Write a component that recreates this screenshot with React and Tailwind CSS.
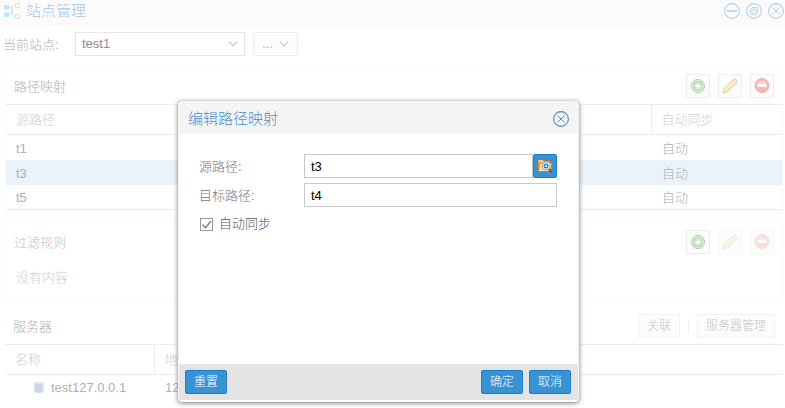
import { useState } from 'react';

const pathMappings = [
  { id: 1, source: 't1', sync: '自动' },
  { id: 2, source: 't3', sync: '自动', selected: true },
  { id: 3, source: 't5', sync: '自动' },
];

const SiteIcon = () => (
  <svg width="18" height="18" viewBox="0 0 18 18" fill="none">
    <rect x="1" y="3" width="5" height="4.500" rx=".8" fill="#b9e6fb" />
    <rect x="1" y="10.500" width="5" height="4.500" rx=".8" fill="#b9e6fb" />
    <path d="M6 5.500h2.500v7H6M8.500 9h1V5l1-2h2M9.500 9v3l1.500 2.500h1.500" stroke="#dde8e4" />
    <rect x="12.500" y="1.500" width="4" height="4" rx=".5" stroke="#dce1dc" />
    <rect x="12.500" y="12.500" width="4" height="4" rx=".5" stroke="#dce1dc" />
  </svg>
);

const WindowIcon = ({ children }) => (
  <svg width="16" height="16" viewBox="0 0 16 16" fill="none" stroke="currentColor">
    <circle cx="8" cy="8" r="7.400" strokeWidth="1.100" />
    {children}
  </svg>
);

const CrossPath = () => <path d="M4.500 4.500l7 7M11.500 4.500l-7 7" />;

const AddIcon = () => (
  <svg width="16" height="16" viewBox="0 0 16 16">
    <circle cx="8" cy="8" r="6.600" fill="#8fd07f" stroke="#5e9e5e" />
    <circle cx="8" cy="8" r="5.500" fill="#74c266" stroke="#b5e0ac" />
    <path d="M8 5v6M5 8h6" stroke="#fff" strokeWidth="2.200" />
  </svg>
);

const EditIcon = () => (
  <svg width="16" height="16" viewBox="0 0 16 16">
    <path d="M1 15l1-4.500L11 1.500q1-1 2.200-.500l1.800 1.800q.500 1.200-.500 2.200L5.500 14z" fill="#f7cf52" stroke="#b58a35" strokeWidth=".8" />
    <path d="M3.500 11.500l8-8" stroke="#fdeaa0" strokeWidth="1.500" />
    <path d="M11 1.500q1-1 2.200-.500l1.800 1.800q.500 1.200-.500 2.200l-1 1-3.500-3.500z" fill="#efc6a4" stroke="#c79b78" strokeWidth=".6" />
    <path d="M1 15l1-4 3 3z" fill="#eed9ac" />
    <path d="M1 15l.5-2 1.500 1.500z" fill="#555" />
  </svg>
);

const RemoveIcon = () => (
  <svg width="16" height="16" viewBox="0 0 16 16">
    <circle cx="8" cy="7.500" r="7" fill="#ee6a5a" stroke="#d9574b" />
    <path d="M2.500 6a6 5 0 0 1 11 0" fill="#f39b8c" />
    <rect x="3.500" y="6" width="9" height="3" fill="#fff" />
  </svg>
);

const ServerIcon = () => (
  <svg width="12" height="13" viewBox="0 0 12 13">
    <path d="M1 2q5-2 10 0v8.500q-5 3-10 0z" fill="#ccd5e6" />
    <path d="M1 2q5-2 10 0-5 2.500-10 0z" fill="#e6e9ec" />
    <path d="M9 3l2-1v8.500l-2 1z" fill="#dfe2e7" />
    <path d="M1.500 2.500v8" stroke="#e1e3e8" />
  </svg>
);

const BrowseIcon = () => (
  <svg width="16" height="16" viewBox="0 0 16 16">
    <path d="M1 13V2.500L2 1.500h4l1 1.500h6.500V5" fill="#fbd37c" stroke="#c96a12" />
    <path d="M1 13.500L2.500 5H15l-1.500 8.500z" fill="#ffe0a0" stroke="#d9780f" />
    <path d="M11.500 11l3.500 3.500" stroke="#7a5a18" strokeWidth="2" />
    <circle cx="9" cy="8" r="4" fill="#eef6fc" stroke="#8aa3b5" strokeWidth=".8" />
    <circle cx="9" cy="8" r="1.800" fill="#fff" stroke="#2f83c4" strokeWidth="1.400" />
  </svg>
);

const Chevron = () => (
  <svg width="10" height="6" viewBox="0 0 10 6" fill="none" stroke="#cdcdcd" strokeWidth="1.300">
    <path d="M1 .8l4 4 4-4" />
  </svg>
);

const ToolButton = ({ label, disabled, children }) => (
  <button
    type="button"
    aria-label={label}
    disabled={disabled}
    className={`flex size-6 items-center justify-center rounded-xs border bg-[#fcfcfc] ${disabled ? 'border-[#f7f7f7]' : 'border-[#ededed]'}`}
  >
    <span className={disabled ? 'opacity-20' : 'opacity-45'}>{children}</span>
  </button>
);

const TextButton = ({ children }) => (
  <button type="button" className="h-6 rounded-xs border border-[#f1f1f1] bg-[#fcfcfc] px-2 text-xs text-[#c4c4c4]">
    {children}
  </button>
);

const PrimaryButton = ({ children, onClick }) => (
  <button
    type="button"
    onClick={onClick}
    className="h-6 rounded-xs border border-[#157fcc] bg-[#3892d4] px-2 text-xs text-white"
  >
    {children}
  </button>
);

const EditDialog = () => {
  const [source, setSource] = useState('t3');
  const [target, setTarget] = useState('t4');
  const [autoSync, setAutoSync] = useState(true);

  const reset = () => {
    setSource('t3');
    setTarget('t4');
    setAutoSync(true);
  };

  return (
    <div
      role="dialog"
      aria-labelledby="dialog-title"
      className="absolute top-[101px] left-[178px] flex h-[301px] w-[401px] flex-col overflow-hidden rounded border border-[#f4f4f4] bg-white shadow-[0_1px_5px_#777]"
    >
      <div className="flex h-8 shrink-0 items-center justify-between bg-[#f4f4f4] px-[9px] pt-0.5">
        <h2 id="dialog-title" className="text-[15px] leading-5 text-[#4a8fcb]">编辑路径映射</h2>
        <button type="button" aria-label="关闭" className="text-[#4a8fc0]">
          <WindowIcon><CrossPath /></WindowIcon>
        </button>
      </div>
      <form className="flex flex-1 flex-col gap-[5px] pt-5 pr-[21px] pl-5">
        <div className="flex items-center">
          <label htmlFor="source" className="w-[105px] pt-0.5 text-[#777]">源路径:</label>
          <input
            id="source"
            value={source}
            onChange={(e) => setSource(e.target.value)}
            className="h-6 min-w-0 flex-1 border border-[#c8c8c8] px-1.5 text-black"
          />
          <button
            type="button"
            aria-label="浏览"
            className="flex size-6 items-center justify-center rounded-xs border border-[#157fcc] bg-[#3892d4]"
          >
            <BrowseIcon />
          </button>
        </div>
        <div className="flex items-center">
          <label htmlFor="target" className="w-[105px] pt-0.5 text-[#777]">目标路径:</label>
          <input
            id="target"
            value={target}
            onChange={(e) => setTarget(e.target.value)}
            className="h-6 min-w-0 flex-1 border border-[#c8c8c8] px-1.5 text-black"
          />
        </div>
        <label className="flex h-6 items-center gap-1.5 pl-px text-[#555]">
          <span className="grid">
            <input
              type="checkbox"
              checked={autoSync}
              onChange={(e) => setAutoSync(e.target.checked)}
              className="peer col-start-1 row-start-1 size-[13px] appearance-none border border-[#999] bg-white"
            />
            <svg
              width="13"
              height="13"
              viewBox="0 0 13 13"
              fill="none"
              stroke="#8a8a8a"
              strokeWidth="1.600"
              className="pointer-events-none invisible col-start-1 row-start-1 peer-checked:visible"
            >
              <path d="M2.500 6.500l3 3.200L11 3" />
            </svg>
          </span>
          自动同步
        </label>
      </form>
      <div className="mb-px flex h-9 shrink-0 items-center gap-1.5 bg-[#e4e4e4] pr-[7px] pl-1.5">
        <PrimaryButton onClick={reset}>重置</PrimaryButton>
        <span className="flex-1" />
        <PrimaryButton>确定</PrimaryButton>
        <PrimaryButton>取消</PrimaryButton>
      </div>
    </div>
  );
};

const App = () => {
  return (
    <div className="relative min-h-screen overflow-hidden bg-white font-['Liberation_Sans','Noto_Sans_CJK_SC',sans-serif] text-[13px] leading-5 font-light text-[#b0b0b0]">
      <header className="flex h-[26px] items-center bg-[#fbfbfb] pb-1 pl-[3px]">
        <SiteIcon />
        <h1 className="flex-1 pl-[5px] text-[15px] leading-5 text-[#a9c9e8]">站点管理</h1>
        <div className="flex gap-1.5 pr-px text-[#b3d0e8]">
          <button type="button" aria-label="最小化">
            <WindowIcon><path d="M3 8h10" strokeWidth="1.500" /></WindowIcon>
          </button>
          <button type="button" aria-label="还原">
            <WindowIcon>
              <path d="M6 4.500h5.500V10M4.500 6v5.500H10M4.500 4.500l7 7M4.500 7.500l4 4M7.500 4.500l4 4" strokeWidth=".9" />
            </WindowIcon>
          </button>
          <button type="button" aria-label="关闭">
            <WindowIcon><CrossPath /></WindowIcon>
          </button>
        </div>
      </header>

      <div className="flex items-center gap-2 py-1.5 pl-[3px]">
        <label htmlFor="site" className="w-16 pt-0.5">当前站点:</label>
        <div className="grid w-[170px] items-center">
          <select
            id="site"
            className="col-start-1 row-start-1 h-6 w-full appearance-none border border-[#e6e6e6] bg-white px-1.5 text-[#8c8c8c]"
          >
            <option>test1</option>
          </select>
          <span className="pointer-events-none col-start-1 row-start-1 justify-self-end pr-[7px]">
            <Chevron />
          </span>
        </div>
        <button
          type="button"
          className="flex h-6 w-[45px] items-center justify-between rounded-xs border border-[#eee] bg-[#fcfcfc] px-2"
        >
          ...
          <Chevron />
        </button>
      </div>

      <main className="flex flex-col pr-0.5 pl-[5px]">
        <section className="mt-[5px] border-x border-t border-[#fafafa]">
          <div className="flex h-9 items-center gap-2 px-2">
            <h2 className="flex-1 pt-0.5">路径映射</h2>
            <ToolButton label="添加"><AddIcon /></ToolButton>
            <ToolButton label="编辑"><EditIcon /></ToolButton>
            <ToolButton label="删除"><RemoveIcon /></ToolButton>
          </div>
          <table className="w-full table-fixed text-left">
            <thead>
              <tr className="h-[30px] border-y border-[#ececec] text-[#cfcfcf]">
                <th className="pl-2.5 font-light">源路径</th>
                <th className="w-[131px] border-l border-[#ececec] pl-2.5 font-light">自动同步</th>
              </tr>
            </thead>
            <tbody className="border-b border-[#ececec]">
              {pathMappings.map((row) => (
                <tr key={row.id} className={`h-[25px] ${row.selected ? 'bg-[#ebf3fa]' : 'bg-white'}`}>
                  <td className="pt-[3px] pl-2.5">{row.source}</td>
                  <td className="pt-[3px] pl-[11px]">{row.sync}</td>
                </tr>
              ))}
            </tbody>
          </table>
        </section>

        <section className="mt-3 h-[76px] border border-[#fafafa] text-[#c4c4c4]">
          <div className="flex h-[37px] items-center gap-2 px-2">
            <h2 className="flex-1 pt-0.5">过滤规则</h2>
            <ToolButton label="添加规则"><AddIcon /></ToolButton>
            <ToolButton label="编辑规则" disabled><EditIcon /></ToolButton>
            <ToolButton label="删除规则" disabled><RemoveIcon /></ToolButton>
          </div>
          <p className="pt-2 pl-2.5 text-[#cfcfcf]">没有内容</p>
        </section>

        <section className="mt-2.5">
          <div className="flex h-9 items-center gap-2 px-2">
            <h2 className="flex-1 pt-0.5">服务器</h2>
            <TextButton>关联</TextButton>
            <span className="h-3.5 w-px bg-[#efefef]" />
            <TextButton>服务器管理</TextButton>
          </div>
          <table className="w-full table-fixed text-left">
            <thead>
              <tr className="h-[30px] border-y border-[#ececec] text-[#cfcfcf]">
                <th className="w-[149px] pl-2.5 font-light">名称</th>
                <th className="border-l border-[#ececec] pl-2.5 font-light">地址</th>
              </tr>
            </thead>
            <tbody>
              <tr className="h-[26px]">
                <td className="pl-7">
                  <span className="flex items-center gap-[6px]">
                    <ServerIcon />
                    test127.0.0.1
                  </span>
                </td>
                <td className="pl-[11px]">127.0.0.1</td>
              </tr>
            </tbody>
          </table>
        </section>
      </main>

      <EditDialog />
    </div>
  );
};

export default App;
